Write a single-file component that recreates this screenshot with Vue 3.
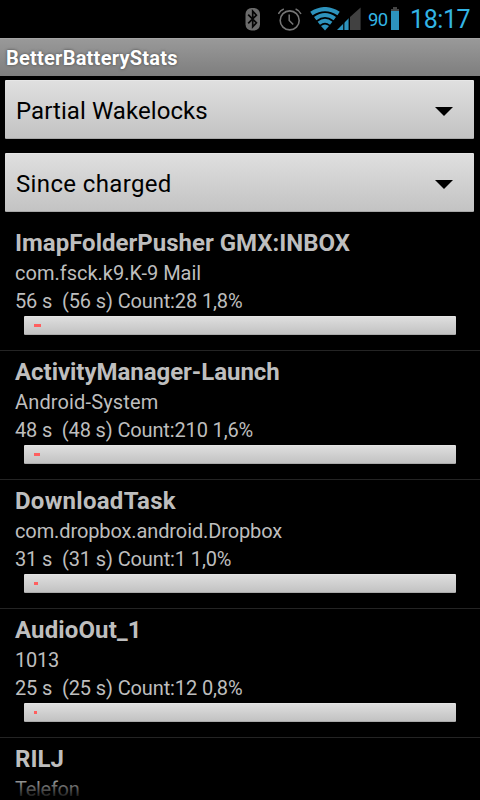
<script setup>
const spinners = [
  { label: 'Partial Wakelocks', cls: 'sp-a' },
  { label: 'Since charged', cls: 'sp-b' },
]
const stats = [
  { name: 'ImapFolderPusher GMX:INBOX', source: 'com.fsck.k9.K-9 Mail', detail: '56 s  (56 s) Count:28 1,8%', mark: 7 },
  { name: 'ActivityManager-Launch', source: 'Android-System', detail: '48 s  (48 s) Count:210 1,6%', mark: 6 },
  { name: 'DownloadTask', source: 'com.dropbox.android.Dropbox', detail: '31 s  (31 s) Count:1 1,0%', mark: 4 },
  { name: 'AudioOut_1', source: '1013', detail: '25 s  (25 s) Count:12 0,8%', mark: 3 },
  { name: 'RILJ', source: 'Telefon', detail: '', mark: 0 },
]
</script>

<template>
  <div class="screen">
    <header class="status">
      <svg class="bt" width="15" height="24" viewBox="0 0 15 24">
        <rect x="0.5" y="1" width="14.5" height="22.5" rx="6" fill="#6b6b6b" />
        <path d="M3.2 7.6 L11.4 15.8 L7.7 19.8 V4.2 L11.4 8.2 L3.2 16.4" fill="none" stroke="#050505" stroke-width="1.7" />
      </svg>
      <svg class="alarm" width="24" height="24" viewBox="0 0 24 24" fill="none" stroke="#757575">
        <circle cx="11.7" cy="13.4" r="9.5" stroke-width="1.6" />
        <path d="M11.2 7.5 V13.5 L15.2 17.5" stroke-width="1.5" />
        <path d="M0.4 7 Q2 3.5 5.8 2 M17.6 2 Q21.4 3.5 23 7" stroke-width="1.5" />
      </svg>
      <svg class="wifi" width="52" height="24" viewBox="0 0 52 24">
        <g fill="none" stroke="#2d93bd" stroke-width="4.2">
          <path d="M1.4 6.6 Q15 -2.4 28.6 6.6" />
          <path d="M5.2 11.6 Q15 4.4 24.8 11.6" stroke-width="4" />
          <path d="M8.8 16.2 Q15 11.2 21.2 16.2" stroke-width="3.8" />
        </g>
        <path d="M11 19.1 Q15 16 19 19.1 L15 23.4 Z" fill="#2d93bd" />
        <path d="M27 23 L39 11 V23 Z" fill="#2d93bd" />
        <path d="M40 23 V10 L50.6 0.6 V23 Z" fill="#414141" />
        <path d="M33.8 15 V23 M39.2 10 V23" stroke="#000" stroke-width="1.2" />
      </svg>
      <span class="pct">90</span>
      <svg class="batt" width="8" height="24" viewBox="0 0 8 24">
        <rect x="2" y="0" width="4" height="2" fill="#444" />
        <rect x="0" y="2" width="8" height="3" fill="#444" />
        <rect x="0" y="4" width="8" height="19" fill="#2d93bd" />
      </svg>
      <span class="clock">18:17</span>
    </header>

    <div class="titlebar"><span>BetterBatteryStats</span></div>

    <div class="spinners">
      <div v-for="s in spinners" :key="s.label" class="spinner" :class="s.cls">
        <span>{{ s.label }}</span>
        <svg width="18" height="9" viewBox="0 0 18 9"><path d="M0 0 H18 L9 9 Z" fill="#000" /></svg>
      </div>
    </div>

    <ul class="list">
      <li v-for="(r, i) in stats" :key="r.name" :class="'row r' + i">
        <div class="name"><span>{{ r.name }}</span></div>
        <div class="source"><span>{{ r.source }}</span></div>
        <template v-if="r.detail">
          <div class="detail"><span>{{ r.detail }}</span></div>
          <div class="bar"><i :style="{ width: r.mark + 'px' }"></i></div>
        </template>
      </li>
    </ul>
    <div class="fade"></div>
  </div>
</template>

<style>
body { background: #000; }
</style>

<style scoped>
.screen {
  position: relative;
  width: 480px;
  height: 800px;
  overflow: hidden;
  background: #000;
  font-family: Roboto, sans-serif;
}
.status {
  display: flex;
  align-items: flex-start;
  height: 31px;
  padding-top: 7px;
  padding-left: 245px;
}
.status svg { flex: none; }
.alarm { margin-left: 18px; }
.wifi { margin-left: 8px; }
.pct {
  width: 22px;
  margin-left: 6px;
  margin-top: 3px;
  font-size: 18.5px;
  line-height: 20px;
  color: #33b5e5;
  letter-spacing: -0.6px;
}
.batt { margin-left: 1px; }
.clock {
  margin-left: 11px;
  font-size: 25px;
  line-height: 26px;
  letter-spacing: -0.4px;
  color: #33b5e5;
  white-space: nowrap;
}
.titlebar {
  height: 38px;
  padding-left: 6px;
  background: linear-gradient(#999, #7e7e7e);
  border-top: 1px solid #a4a4a4;
  box-sizing: border-box;
  font-size: 20px;
  font-weight: 700;
  line-height: 38px;
  letter-spacing: 0.24px;
  color: #fff;
  text-shadow: 0 0 3px #444;
}
.spinners {
  display: flex;
  flex-direction: column;
  gap: 14px;
  padding: 4px 6px 0 5px;
}
.spinner {
  display: flex;
  align-items: center;
  justify-content: space-between;
  box-sizing: border-box;
  height: 59px;
  padding: 3px 21px 0 11px;
  border-radius: 1px;
  border-top: 1px solid #e6e6e6;
  border-bottom: 1px solid #a8a8a8;
  background: linear-gradient(#dfdfdf, #c3c3c3);
  font-size: 24px;
  color: #000;
}
.sp-a { letter-spacing: 0.07px; }
.sp-b { letter-spacing: 0.36px; }
.list {
  margin: 10px 0 0;
  padding: 0;
  list-style: none;
}
.row {
  box-sizing: border-box;
  height: 129px;
  padding: 6px 0 0 15px;
  border-bottom: 1px solid #242424;
  color: #bebebe;
  white-space: pre;
}
.name {
  font-size: 24px;
  font-weight: 700;
  line-height: 30px;
}
.source {
  margin-top: 1px;
  font-size: 20px;
  line-height: 28px;
}
.detail {
  font-size: 20px;
  line-height: 28px;
  letter-spacing: -0.12px;
}
.r1 .name { letter-spacing: -0.04px; }
.r1 .source { letter-spacing: 0.15px; }
.r1 .detail { letter-spacing: -0.14px; }
.r2 .name { letter-spacing: 0.27px; }
.r2 .source { letter-spacing: -0.11px; }
.r3 .name { letter-spacing: 0.12px; }
.r3 .source { letter-spacing: -0.2px; }
.r4 .source { letter-spacing: -0.28px; }
.bar {
  box-sizing: border-box;
  width: 432px;
  height: 19px;
  margin: 1px 0 0 9px;
  padding: 7px 0 0 10px;
  border-radius: 1px;
  border-top: 1px solid #e4e4e4;
  border-bottom: 1px solid #aaa;
  background: linear-gradient(#dedede, #c2c2c2);
}
.bar i {
  display: block;
  height: 3px;
  background: #ff5f5f;
}
.fade {
  position: absolute;
  left: 0;
  right: 0;
  bottom: 0;
  height: 24px;
  background: linear-gradient(transparent, #000);
}
</style>
